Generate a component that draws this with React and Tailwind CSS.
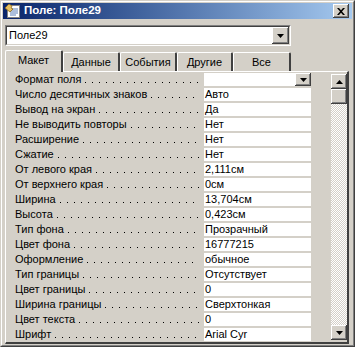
import React from 'react';

const rows = [
  ['Формат поля', null],
  ['Число десятичных знаков', 'Авто'],
  ['Вывод на экран', 'Да'],
  ['Не выводить повторы', 'Нет'],
  ['Расширение', 'Нет'],
  ['Сжатие', 'Нет'],
  ['От левого края', '2,111см'],
  ['От верхнего края', '0см'],
  ['Ширина', '13,704см'],
  ['Высота', '0,423см'],
  ['Тип фона', 'Прозрачный'],
  ['Цвет фона', '16777215'],
  ['Оформление', 'обычное'],
  ['Тип границы', 'Отсутствует'],
  ['Цвет границы', '0'],
  ['Ширина границы', 'Сверхтонкая'],
  ['Цвет текста', '0'],
  ['Шрифт', 'Arial Cyr'],
];

const tabs = [
  ['Макет', 'w-[58px]'],
  ['Данные', 'w-[57px]'],
  ['События', 'w-[57px]'],
  ['Другие', 'w-[56px]'],
  ['Все', 'w-[58px]'],
];

const raised =
  'bg-[#d4d0c8] shadow-[inset_-1px_-1px_#404040,inset_1px_1px_#ffffff,inset_-2px_-2px_#808080,inset_2px_2px_#d4d0c8]';

const DownArrow = () => (
  <svg width="7" height="4" viewBox="0 0 7 4">
    <path d="M0 0h7L3.5 4z" fill="#000" />
  </svg>
);

const UpArrow = () => (
  <svg width="7" height="4" viewBox="0 0 7 4">
    <path d="M0 4h7L3.5 0z" fill="#000" />
  </svg>
);

export default function App() {
  return (
    <div className="w-[355px] h-[347px] overflow-hidden font-['Liberation_Sans',Arial,sans-serif] text-[11px] leading-none text-black">
      <div className="h-full bg-[#d4d0c8] border border-[#d4d0c8] border-r-[#404040] border-b-[#404040]">
        <div className="h-full flex flex-col p-px border border-white border-r-[#808080] border-b-[#808080]">
          {/* Title bar */}
          <div className="h-[18px] flex items-center bg-linear-to-r from-[#0a246a] to-[#a6caf0]">
            <svg width="16" height="16" viewBox="0 0 16 16" className="ml-[2px]">
              <rect x="2.5" y="2.5" width="12" height="12" fill="#fff" stroke="#808080" />
              <path d="M5 6h8M5 8h8M5 10h8M5 12h6" stroke="#5a7fb8" />
              <path d="M0 5l4-4 3 2-1 2 2 1-3 3z" fill="#e8c060" stroke="#8a6a20" strokeWidth="0.8" />
            </svg>
            <span className="ml-[3px] font-bold text-white text-[11.5px]">Поле: Поле29</span>
            <div className={`ml-auto mr-[3px] w-[16px] h-[14px] flex items-center justify-center ${raised}`}>
              <svg width="8" height="7" viewBox="0 0 8 7">
                <path d="M0 0h2l2 2.2L6 0h2L5 3.5 8 7H6L4 4.8 2 7H0l3-3.5z" fill="#000" />
              </svg>
            </div>
          </div>

          {/* Object combo */}
          <div className="mt-[6px] ml-[2px] w-[286px] h-[21px] border border-[#808080] border-r-white border-b-white">
            <div className="h-full flex items-center bg-white border border-[#404040] border-r-[#d4d0c8] border-b-[#d4d0c8]">
              <span className="pl-[2px]">Поле29</span>
              <div className={`ml-auto w-[17px] h-[17px] flex items-center justify-center ${raised}`}>
                <DownArrow />
              </div>
            </div>
          </div>

          {/* Tabs */}
          <div className="mt-[4px] ml-[2px] h-[21px] flex items-start relative z-10">
            {tabs.map(([name, w], i) =>
              i === 0 ? (
                <div
                  key={name}
                  className={`${w} h-[22px] flex items-center justify-center pb-[2px] bg-[#d4d0c8] border-l border-t border-white border-r-2 border-r-[#404040] rounded-tl-[2px] rounded-tr-[2px]`}
                >
                  {name}
                </div>
              ) : (
                <div
                  key={name}
                  className={`${w} h-[19px] mt-[2px] flex items-center justify-center bg-[#d4d0c8] border-l border-t border-white border-r-2 border-r-[#404040] rounded-tl-[2px] rounded-tr-[2px]`}
                >
                  {name}
                </div>
              )
            )}
          </div>

          {/* Property page */}
          <div className="flex-1 ml-[2px] mr-[3px] mb-[2px] flex border-t border-l border-white border-r-2 border-b-2 border-r-[#404040] border-b-[#404040]">
            <div className="flex-1 overflow-hidden">
              {rows.map(([label, value]) => (
                <div key={label} className="h-[15px] flex">
                  <div className="w-[198px] pl-[9px] pr-[5px] flex items-center whitespace-nowrap">
                    <span>{label}</span>
                    <span className="flex-1 self-end mb-[4px] ml-[4px] h-px bg-[linear-gradient(90deg,#000_1px,transparent_1px)] bg-[length:7px_1px] bg-repeat-x" />
                  </div>
                  <div className="w-[107px] h-[13px] mt-px bg-white flex items-center pl-px whitespace-nowrap">
                    {value === null ? (
                      <div className={`ml-auto w-[16px] h-[13px] flex items-center justify-center ${raised}`}>
                        <DownArrow />
                      </div>
                    ) : (
                      value
                    )}
                  </div>
                </div>
              ))}
            </div>

            {/* Scrollbar */}
            <div className="w-[16px] my-[2px] flex flex-col">
              <div className={`h-[15px] flex items-center justify-center ${raised}`}>
                <UpArrow />
              </div>
              <div className={`h-[15px] ${raised}`} />
              <div className="flex-1 bg-[conic-gradient(#ffffff_25%,#d4d0c8_0_50%,#ffffff_0_75%,#d4d0c8_0)] bg-[length:2px_2px]" />
              <div className={`h-[15px] flex items-center justify-center ${raised}`}>
                <DownArrow />
              </div>
            </div>
          </div>
        </div>
      </div>
    </div>
  );
}
